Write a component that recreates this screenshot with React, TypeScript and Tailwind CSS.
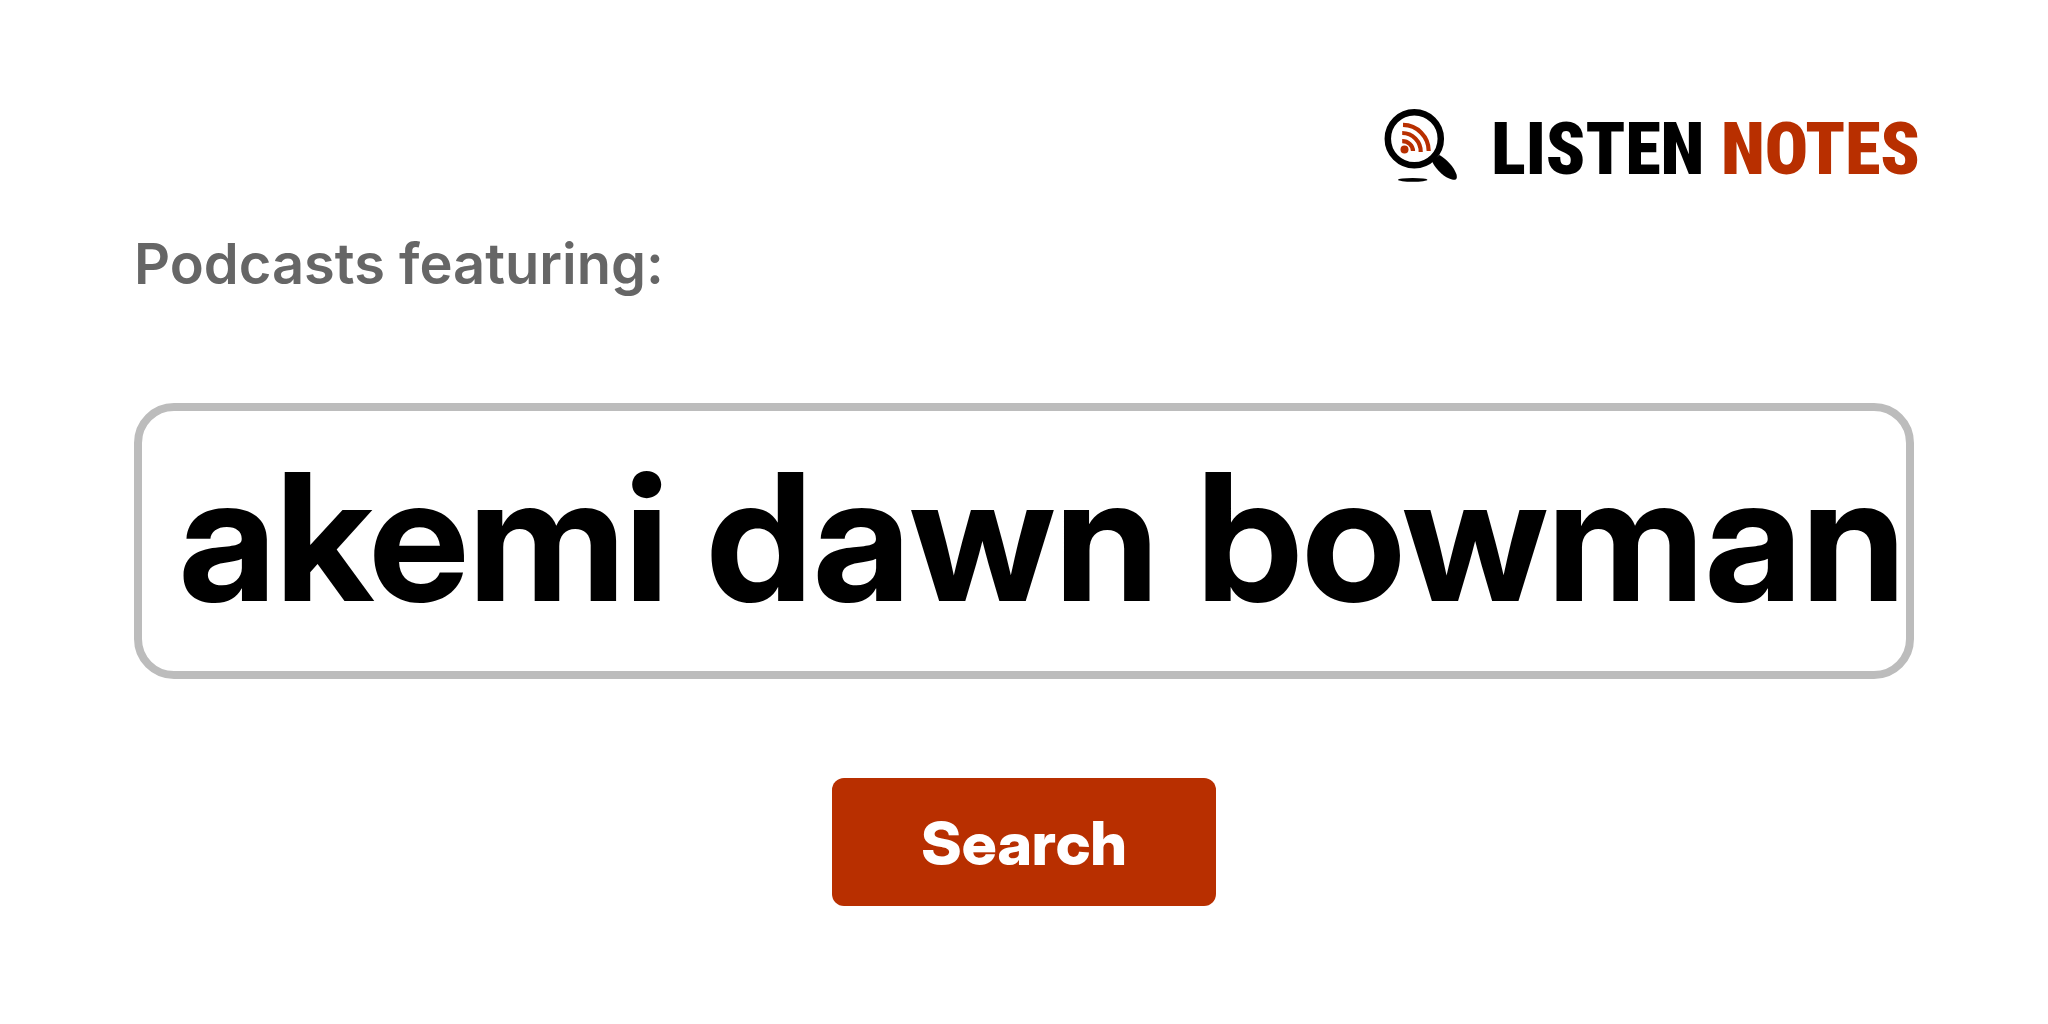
function LogoMark() {
  return (
    <svg viewBox="0 0 100 100" className="size-25 shrink-0" aria-hidden="true">
      <circle cx="43.3" cy="43.8" r="26.5" fill="none" stroke="#000" strokeWidth="6.5" />
      <path d="M61 66.5 L68.5 60 C75.5 64 83 72 85.500 79.500 C86.500 83.500 85.500 85.500 81 84.500 C73.500 82.500 66 76 61 66.5 Z" fill="#000" />
      <ellipse cx="41.7" cy="84.8" rx="14.7" ry="1.9" fill="#000" />
      <g fill="none" stroke="#b82f00" strokeWidth="4.2">
        <path d="M31.2 46.1 A10.7 10 0 0 1 42 56" />
        <path d="M31.2 38 A18.5 18.5 0 0 1 49.7 57" />
        <path d="M32 29.9 A26 26 0 0 1 57.7 56" />
      </g>
      <circle cx="33.5" cy="54.5" r="4" fill="#b82f00" />
    </svg>
  );
}

export default function App() {
  return (
    <main className="min-h-screen bg-white font-['Inter',sans-serif]">
      <header className="flex justify-end px-32 pt-[95px]">
        <a href="#" className="flex items-start gap-5">
          <LogoMark />
          <span className="whitespace-nowrap font-['Roboto_Condensed','Roboto',sans-serif] text-[72px] leading-[110px] font-black text-black">
            LISTEN <span className="text-[#b82f00]">NOTES</span>
          </span>
        </a>
      </header>
      <form className="px-[134px]" onSubmit={(e) => e.preventDefault()}>
        <label htmlFor="query" className="mt-[23px] block text-[56px] leading-[72px] font-semibold text-[#666]">
          Podcasts featuring:
        </label>
        <input
          id="query"
          type="text"
          defaultValue="akemi dawn bowman"
          className="mt-[103px] block h-[276px] w-full rounded-[40px] border-8 border-[#bcbcbc] bg-white pb-2 pl-9 font-['Inter_Display','Inter',sans-serif] text-[177px] font-bold text-black outline-none"
        />
        <div className="mt-[99px] flex justify-center">
          <button type="submit" className="h-32 w-96 rounded-xl bg-[#b82f00] pt-1 font-['Inter_Display','Inter',sans-serif] text-[61px] font-extrabold text-white">
            Search
          </button>
        </div>
      </form>
    </main>
  );
}
